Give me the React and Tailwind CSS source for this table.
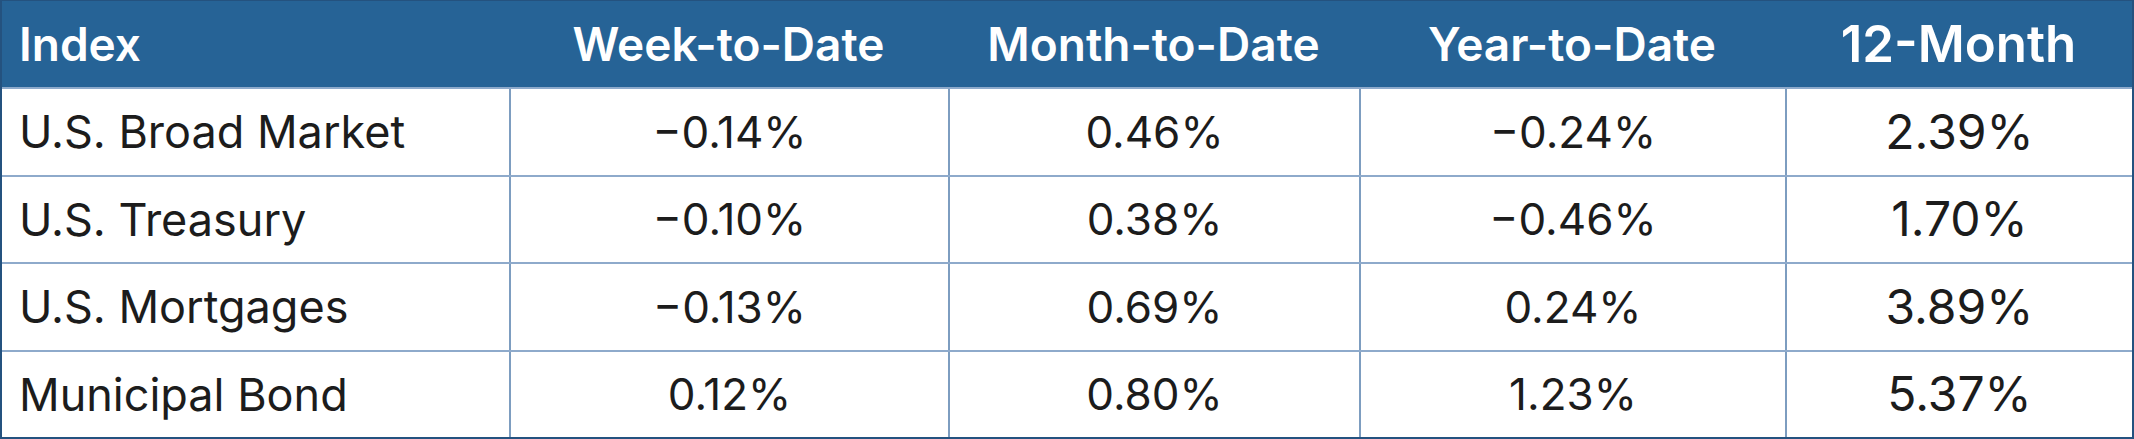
import React from "react";

const rows = [
  ["U.S. Broad Market", "\u22120.14%", "0.46%", "\u22120.24%", "2.39%"],
  ["U.S. Treasury", "\u22120.10%", "0.38%", "\u22120.46%", "1.70%"],
  ["U.S. Mortgages", "\u22120.13%", "0.69%", "0.24%", "3.89%"],
  ["Municipal Bond", "0.12%", "0.80%", "1.23%", "5.37%"],
];

const cols = "grid grid-cols-[507px_439px_411px_426px_1fr]";

export default function App() {
  return (
    <div
      className="w-[2134px] h-[439px] bg-white border-x-2 border-b-2 border-t border-[#24527f] flex flex-col overflow-hidden"
      style={{ fontFamily: "Inter, 'Noto Sans', sans-serif" }}
    >
      <div className={`${cols} h-[86px] bg-[#266396] text-white font-semibold items-center`}>
        <div className="pl-[17px] text-[46px]">Index</div>
        <div className="text-center text-[46px]">Week-to-Date</div>
        <div className="text-center text-[46px]">Month-to-Date</div>
        <div className="text-center text-[46px]">Year-to-Date</div>
        <div className="text-center text-[51px]">12-Month</div>
      </div>
      {rows.map((r, i) => (
        <div
          key={i}
          className={`${cols} flex-1 border-t-2 border-[#8eaacb] text-[#1c1c1c] items-stretch`}
        >
          <div className="pl-[17px] text-[45px] flex items-center">{r[0]}</div>
          <div className="border-l-2 border-[#7d9dc0] text-[44px] flex items-center justify-center">{r[1]}</div>
          <div className="border-l-2 border-[#7d9dc0] text-[44px] flex items-center justify-center">{r[2]}</div>
          <div className="border-l-2 border-[#7d9dc0] text-[44px] flex items-center justify-center">{r[3]}</div>
          <div className="border-l-2 border-[#7d9dc0] text-[48px] flex items-center justify-center">{r[4]}</div>
        </div>
      ))}
    </div>
  );
}
